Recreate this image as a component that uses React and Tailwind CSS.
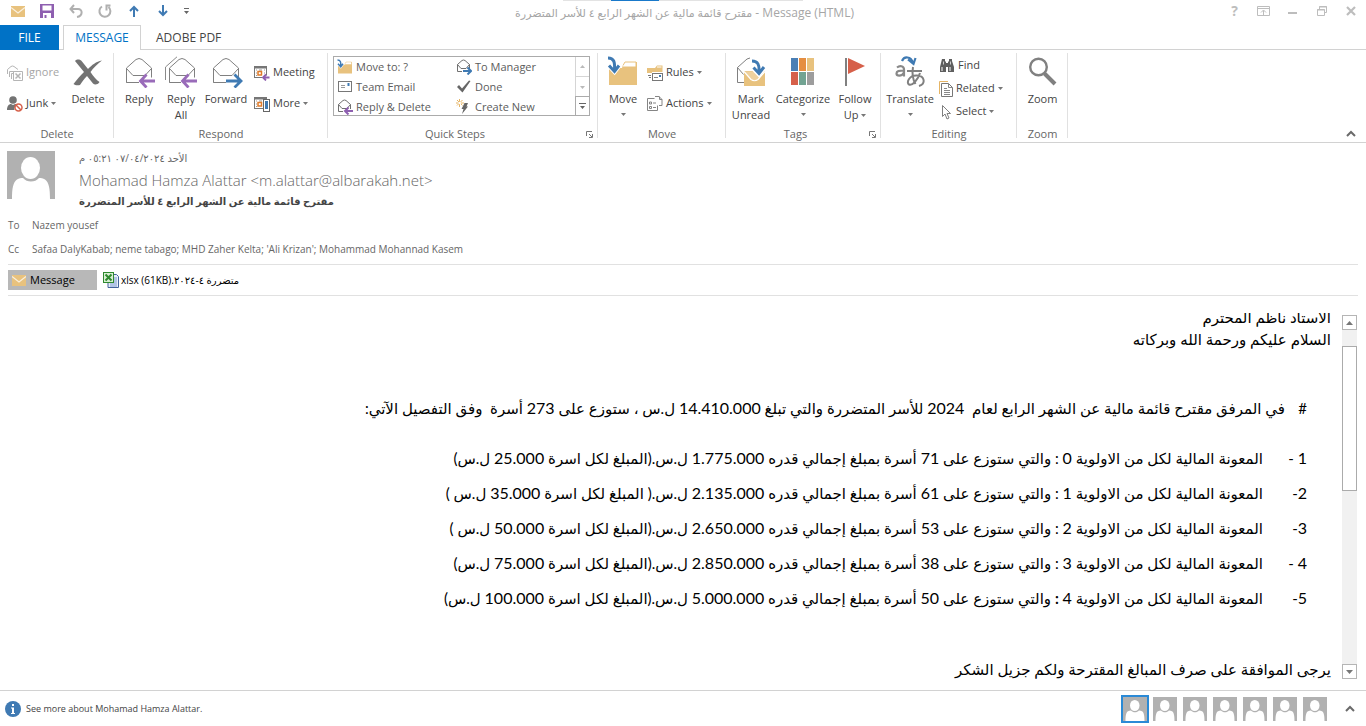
import React from "react";

const PURPLE = "#8e5fb0";
const BLUE = "#3f7ab3";
const GRAY = "#737373";
const TAN = "#e8c27e";

function Caret({ className = "" }) {
  return (
    <svg width="5" height="3" viewBox="0 0 5 3" className={className} aria-hidden="true">
      <path d="M0 0h5L2.5 3z" fill="#777" />
    </svg>
  );
}

function Chevron() {
  return (
    <svg width="10" height="7" viewBox="0 0 10 7" fill="none" stroke="#6a6a6a" strokeWidth="2" aria-hidden="true">
      <path d="M1 6l4-4 4 4" />
    </svg>
  );
}

function Person({ size, className = "" }) {
  return (
    <svg width={size} height={size} viewBox="0 0 48 48" className={className} aria-hidden="true">
      <rect width="48" height="48" fill="#b1b1b1" />
      <ellipse cx="23.5" cy="17" rx="9.5" ry="11" fill="#fff" />
      <path d="M5 48c0-10 1-17 5-19.500c2-1.200 4-1.500 6-1.500c2 2.500 5 3.500 8 3.500s6-1 8-3.500c2 0 4 .3 6 1.500c4 2.500 5 9.500 5 19.500z" fill="#fff" />
    </svg>
  );
}

function MailIcon() {
  return (
    <svg width="14" height="11" viewBox="0 0 14 11" aria-hidden="true">
      <rect width="14" height="11" fill={TAN} />
      <path d="M0 1.500l7 5.500l7-5.500" fill="none" stroke="#fff" strokeOpacity=".75" strokeWidth="1.300" />
    </svg>
  );
}

function Envelope({ all, arrow }) {
  return (
    <svg width="34" height="32" viewBox="0 0 34 32" fill="none" aria-hidden="true">
      {all && <path d="M1.500 24V11L13 0.800" stroke="#8a8a8a" />}
      <g transform={all ? "translate(1 0)" : "translate(0 0)"}>
        <path d="M4.500 12L14 3.500q3-2 6 0L29.500 12v14.500h-25z" fill="#fff" stroke="#808080" />
        <path d="M4.500 12.500l6.500 7h12l6.500-7M4.500 26.500v-14" stroke="#808080" />
      </g>
      {arrow === "left" ? (
        <g>
          <path d="M17 25h16" stroke="#fff" strokeWidth="7" />
          <path d="M18 25h15M24.500 18.500L18.500 25l6 6.500" stroke="#996bb9" strokeWidth="2.800" />
        </g>
      ) : (
        <g>
          <path d="M17 25h16" stroke="#fff" strokeWidth="7" />
          <path d="M17 25h15M25.500 18.500L32 25l-6.500 6.500" stroke={BLUE} strokeWidth="2.800" />
        </g>
      )}
    </svg>
  );
}

function SmallEnvelope({ arrow }) {
  return (
    <svg width="16" height="16" viewBox="0 0 16 16" fill="none" aria-hidden="true">
      <path d="M1.500 5.500L6 1.500q1.500-1 3 0l4.500 4v7h-12z" fill="#fff" stroke="#707070" />
      <path d="M1.500 5.500l3.500 4h5l3.500-4" stroke="#707070" />
      {arrow === "left" ? (
        <g>
          <path d="M6 12h10" stroke="#fff" strokeWidth="4" />
          <path d="M8 12h8M11.500 8.500L8 12l3.500 3.500" stroke={PURPLE} strokeWidth="2" />
        </g>
      ) : (
        <g>
          <path d="M6 12h10" stroke="#fff" strokeWidth="4" />
          <path d="M7 12h8M11.500 8.500L15 12l-3.500 3.500" stroke={BLUE} strokeWidth="2" />
        </g>
      )}
    </svg>
  );
}

function DeleteIcon() {
  return (
    <svg width="30" height="32" viewBox="0 0 30 32" aria-hidden="true">
      <path d="M2 5c2-2 5-2 7 .5L15 13c4-4 8-7.500 14-8.500C25 7.500 20 12 17.500 16c2.500 4 6 8 9 10c-2 3-5 3-6.500 1.500c-2-2.500-4-5-6-7.500c-3 3-5 6-7 9c-2 .5-5 .5-6.500-1c3-4 7-8.500 10.500-12C8 12.500 5 8.500 2 5z" fill={GRAY} />
    </svg>
  );
}

function IgnoreIcon() {
  return (
    <svg width="16" height="16" viewBox="0 0 16 16" fill="none" stroke="#b5b5b5" aria-hidden="true">
      <path d="M.5 9V4.500L4 1.500q1.500-1 3 0L11 4.500" />
      <path d="M2.500 12V6.500h9M4.500 14V8.500h2" />
      <path d="M7 6.500h8.500v9H6.500v-9z" fill="#fff" />
      <path d="M8.500 8.500l5 5M13.500 8.500l-5 5" strokeWidth="1.500" />
    </svg>
  );
}

function JunkIcon() {
  return (
    <svg width="16" height="16" viewBox="0 0 16 16" aria-hidden="true">
      <circle cx="6" cy="4" r="3.800" fill={GRAY} />
      <path d="M0 14c0-4 2-6 4-6l2 1l2-1c1 0 2 .5 2.500 1.500C8 10 7 12 7.500 14z" fill={GRAY} />
      <circle cx="11.500" cy="11.500" r="3.500" fill="#fff" stroke="#d6604a" strokeWidth="1.500" />
      <path d="M9 9l5 5" stroke="#d6604a" strokeWidth="1.500" />
    </svg>
  );
}

function Calendar({ kind }) {
  return (
    <svg width="16" height="16" viewBox="0 0 16 16" fill="none" aria-hidden="true">
      <rect x=".5" y="1.500" width="12" height="11" fill="#fff" stroke="#777" />
      <path d="M0 2.500h13" stroke="#777" strokeWidth="2" />
      <path d="M2 5h1M2 8h1M2 10.500h1M10 5h1M10 8h1M5 5h3" stroke="#999" />
      <rect x="4" y="6.500" width="3.500" height="3.500" fill="#fff" stroke="#e07b2a" strokeWidth="1.500" />
      {kind === "meeting" ? (
        <g>
          <path d="M8 12.500h8" stroke="#fff" strokeWidth="4" />
          <path d="M9 12.500h6.500M12 9.500l-3 3l3 3" stroke={PURPLE} strokeWidth="1.800" />
        </g>
      ) : (
        <g>
          <rect x="9.500" y="3.500" width="6" height="12" fill="#fff" stroke="#666" />
          <rect x="11" y="5" width="3" height="8" fill={BLUE} />
        </g>
      )}
    </svg>
  );
}

function MoveFolder({ size }) {
  return (
    <svg width={size} height={size} viewBox="0 0 32 32" fill="none" aria-hidden="true">
      <path d="M2 12h13l4-6h11v23H2z" fill={TAN} />
      <path d="M16 9.500l2-3.500h11v5H15" fill="#fff" stroke={TAN} strokeWidth="1" />
      <path d="M1 1c6 0 7 4 6.500 13M1.500 9l6 6.500l5-6.500" stroke="#fff" strokeWidth="5" />
      <path d="M1 2c6 0 7 4 6.500 12M2 9.500l5.500 6l4.500-6" stroke={BLUE} strokeWidth="3" />
    </svg>
  );
}

function CardIcon() {
  return (
    <svg width="16" height="16" viewBox="0 0 16 16" fill="none" aria-hidden="true">
      <rect x="1.500" y="2.500" width="13" height="10" fill="#fff" stroke="#777" />
      <path d="M4 6.500h4M4 8.500h4" stroke="#999" />
      <rect x="10.500" y="4" width="2" height="3" fill={BLUE} />
    </svg>
  );
}

function CheckIcon() {
  return (
    <svg width="16" height="16" viewBox="0 0 16 16" aria-hidden="true">
      <path d="M1 8l2-2l3 3.500L13 1.500l1.500.5L6.500 13.500z" fill="#666" />
    </svg>
  );
}

function BoltIcon() {
  return (
    <svg width="16" height="16" viewBox="0 0 16 16" aria-hidden="true">
      <path d="M3.500 0v8M0 4h8M1 1l5.500 5.500M6.500 1L1 6.500" stroke="#e6b565" strokeWidth="1" />
      <circle cx="3.700" cy="4" r="1.300" fill="#fff" />
      <path d="M8.500 4H12l-1.500 3.500H12L6 15l1.500-5H5.500z" fill="#666" />
    </svg>
  );
}

function RulesIcon() {
  return (
    <svg width="16" height="16" viewBox="0 0 16 16" fill="none" aria-hidden="true">
      <path d="M0 3h8l2-2.500h5.500V12H0z" fill={TAN} />
      <path d="M10 2h4.500" stroke="#fff" />
      <path d="M0 8h5v8H0z" fill="#fff" />
      <path d="M1 10.500h3M2 12.500h2" stroke="#777" />
      <path d="M5 7h11v2H5z" fill="#fff" />
      <rect x="5.500" y="8.500" width="10" height="7" fill="#fff" stroke="#777" />
      <path d="M7 12.500h4" stroke="#888" />
      <rect x="12" y="10" width="2" height="2" fill={BLUE} />
    </svg>
  );
}

function ActionsIcon() {
  return (
    <svg width="16" height="16" viewBox="0 0 16 16" fill="none" stroke="#858585" aria-hidden="true">
      <path d="M7.500 2.500h-7v12h10v-5" />
      <path d="M8 .5h4l3 3v6h-3" />
      <path d="M12.500.5v3H15M2.500 6h2v2h-2zM2.500 10.500h2v2h-2zM6 7h3M6 11.500h3" />
    </svg>
  );
}

function MarkUnreadIcon() {
  return (
    <svg width="32" height="32" viewBox="0 0 32 32" fill="none" aria-hidden="true">
      <path d="M2.500 26.500v-15L12 3q3-2 6 0l6 5" stroke="#808080" />
      <path d="M2.500 11.500l6 7M2.500 26.500h8" stroke="#808080" />
      <path d="M9 15h21v15H9z" fill={TAN} />
      <path d="M9 15.500l7 8q3.500 2.500 7 0l7-8" stroke="#fff" strokeWidth="1.200" fill="#fff" fillOpacity=".25" />
      <path d="M15 3c8 0 9 5 9 12M18 12l6 6l5.500-7" stroke="#fff" strokeWidth="5" />
      <path d="M17 5c6 0 7.500 4 7 11M18.500 11.500l5.500 6l5-6.500" stroke={BLUE} strokeWidth="3" />
    </svg>
  );
}

function CategorizeIcon() {
  return (
    <svg width="24" height="32" viewBox="0 0 24 32" aria-hidden="true">
      <rect x="0" y="2" width="7" height="13" fill="#4a7fb5" />
      <rect x="8" y="2" width="7" height="13" fill="#e58e41" />
      <rect x="16" y="2" width="7" height="13" fill={TAN} />
      <rect x="0" y="16" width="7" height="13" fill="#d6604a" />
      <rect x="8" y="16" width="7" height="13" fill="#72a392" />
      <rect x="16" y="16" width="7" height="13" fill="#9d9d9d" />
    </svg>
  );
}

function FlagIcon() {
  return (
    <svg width="22" height="32" viewBox="0 0 22 32" aria-hidden="true">
      <rect x="1" y="2" width="2" height="28" fill="#808080" />
      <path d="M4 2l17 8L4 18z" fill="#d6604a" />
    </svg>
  );
}

function TranslateIcon() {
  return (
    <svg width="32" height="32" viewBox="0 0 32 32" fill="none" aria-hidden="true">
      <path d="M8 5c2-5 9-5 11 2M14 3.500l5.500 4.500L21.500 2" stroke={BLUE} strokeWidth="2.200" />
      <path d="M3 11.500c2.500-2 7-2 7 2v7M10 14.500c-5 0-7.500 .5-7.500 3s5 3.500 7.500-1" stroke="#888" strokeWidth="2.200" />
      <path d="M13 15h15M19 11c-1 6-.5 12 2.500 17M26 17c-2 7-8 13-11 11.500s0-9.500 8-9s9 8.500 2 10.500" stroke="#808080" strokeWidth="2" />
    </svg>
  );
}

function FindIcon() {
  return (
    <svg width="16" height="16" viewBox="0 0 16 16" fill="#5f5f5f" aria-hidden="true">
      <path d="M3 1h3v2l1 1v10H1V9zM10 1h3v2l2 6v5H9V4l1-1z" />
      <rect x="6" y="5" width="4" height="4" />
      <path d="M3 9v4M11 9v4" stroke="#fff" />
      <path d="M4.500 3.500v3M11.500 3.500v3" stroke="#ccc" />
    </svg>
  );
}

function RelatedIcon() {
  return (
    <svg width="14" height="16" viewBox="0 0 14 16" fill="none" aria-hidden="true">
      <path d="M.5 13V.5H9" stroke="#e6b565" />
      <path d="M2.500 2.500h7l4 4v9h-11z" fill="#fff" stroke="#777" />
      <path d="M9.500 2.500v4h4M5 7.500h3M5 9.500h6M5 11.500h6M5 13.500h6" stroke="#888" />
    </svg>
  );
}

function SelectIcon() {
  return (
    <svg width="14" height="16" viewBox="0 0 14 16" fill="#fff" stroke="#808080" aria-hidden="true">
      <path d="M3.500 1.500v11l2.500-2.500l2 5l2-1l-2-4.500h3.500z" />
    </svg>
  );
}

function ZoomIcon() {
  return (
    <svg width="28" height="32" viewBox="0 0 28 32" fill="none" stroke="#808080" aria-hidden="true">
      <circle cx="9.500" cy="11" r="8.300" strokeWidth="2.400" />
      <path d="M15.500 17.500l10.500 10.500" strokeWidth="4" />
    </svg>
  );
}

function ExcelIcon() {
  return (
    <svg width="16" height="16" viewBox="0 0 16 16" fill="none" aria-hidden="true">
      <path d="M5 2.500h8.500l2 2v11H5z" fill="#e8eefa" stroke="#44639c" />
      <path d="M11 6h3M11 8h3M11 10h3M7 12h7M7 14h7" stroke="#7d9bd1" />
      <rect x=".5" y=".5" width="10" height="10" fill="#d9f0d3" stroke="#2f8a2f" />
      <path d="M2.500 2.500l6 6M8.500 2.500l-6 6" stroke="#2f8a2f" strokeWidth="2" />
    </svg>
  );
}

function Launcher() {
  return (
    <button aria-label="More options" className="absolute right-[5px] bottom-[4px]">
      <svg width="7" height="7" viewBox="0 0 7 7" fill="none" stroke="#777" aria-hidden="true">
        <path d="M.5 5V.5H6M3 3l3 3M6.500 3v3.500H3" />
      </svg>
    </button>
  );
}

function Group({ name, width, children, launcher }) {
  return (
    <section aria-label={name} className={"relative flex shrink-0 flex-col " + width}>
      <div className="flex h-[76px]">{children}</div>
      <div className={"text-center leading-4 text-[#666] " + (launcher ? "pr-4" : "")}>{name}</div>
      {launcher && <Launcher />}
      <div className="absolute top-[3px] right-0 h-[85px] w-px bg-[#e1e1e1]" />
    </section>
  );
}

function Large({ icon, lines, caret, width }) {
  return (
    <button className={"flex shrink-0 flex-col items-center pt-[6px] text-center leading-4 " + width}>
      {icon}
      <span className="mt-[3px] whitespace-nowrap">{lines[0]}</span>
      {lines[1] && (
        <span className="flex items-center gap-[3px]">
          {lines[1]}
          {caret && <Caret />}
        </span>
      )}
      {!lines[1] && caret && <Caret className="mt-[6px]" />}
    </button>
  );
}

function Small({ icon, label, caret, disabled, height = "h-[31px]" }) {
  return (
    <button
      disabled={disabled}
      className={"flex items-center gap-[3px] whitespace-nowrap " + height + (disabled ? " text-[#a5a5a5]" : "")}
    >
      {icon}
      <span>{label}</span>
      {caret && <Caret />}
    </button>
  );
}

function QuickAccess() {
  const items = [
    ["Mail", <MailIcon />],
    ["Save", (
      <svg width="14" height="14" viewBox="0 0 14 14" aria-hidden="true">
        <path d="M0 0h14v14H0z" fill={PURPLE} />
        <path d="M2.500 1.500h9v5h-9zM3 9h8v5H3z" fill="#fff" />
        <path d="M4.500 11h2v3h-2z" fill={PURPLE} />
      </svg>
    )],
    ["Undo", (
      <svg width="14" height="14" viewBox="0 0 14 14" fill="none" stroke="#b0b0b0" strokeWidth="2" aria-hidden="true">
        <path d="M5 1L1.500 5L5 9M1.500 5H9c5 0 5 7-1 8" />
      </svg>
    )],
    ["Redo", (
      <svg width="14" height="14" viewBox="0 0 14 14" fill="none" stroke="#b0b0b0" strokeWidth="2" aria-hidden="true">
        <path d="M4 2.500a5.500 5.500 0 1 0 6.500.5M7.500 1.500h5M8.500 1v5.500" />
      </svg>
    )],
    ["Previous", (
      <svg width="12" height="12" viewBox="0 0 12 12" fill="none" stroke={BLUE} strokeWidth="2" aria-hidden="true">
        <path d="M6 12V2M2 6l4-4l4 4" />
      </svg>
    )],
    ["Next", (
      <svg width="12" height="12" viewBox="0 0 12 12" fill="none" stroke={BLUE} strokeWidth="2" aria-hidden="true">
        <path d="M6 0v10M2 6l4 4l4-4" />
      </svg>
    )],
  ];
  return (
    <div className="flex h-[22px] flex-1 items-center pl-[3px]">
      {items.map(([name, icon]) => (
        <button key={name} aria-label={name} className="flex w-[29px] justify-center">{icon}</button>
      ))}
      <button aria-label="Customize" className="flex w-[20px] justify-center">
        <svg width="6" height="6" viewBox="0 0 6 6" aria-hidden="true">
          <path d="M0 0h5v1H0zM0 3h5L2.500 6z" fill="#666" />
        </svg>
      </button>
    </div>
  );
}

function WindowButtons() {
  return (
    <div className="flex h-[22px] flex-1 items-center justify-end">
      <button aria-label="Help" className="flex w-[29px] justify-center text-[14px] leading-none font-bold text-[#bdbdbd]">?</button>
      <button aria-label="Ribbon display" className="flex w-[29px] justify-center">
        <svg width="13" height="10" viewBox="0 0 13 10" fill="none" stroke="#bdbdbd" aria-hidden="true">
          <path d="M.5.5h12v9H.5zM0 2.500h13M6.500 9V4.500M4 6.500L6.500 4L9 6.500" />
        </svg>
      </button>
      <button aria-label="Minimize" className="flex w-[29px] justify-center">
        <svg width="9" height="6" viewBox="0 0 9 6" aria-hidden="true"><rect y="4" width="9" height="2" fill="#bdbdbd" /></svg>
      </button>
      <button aria-label="Restore" className="flex w-[29px] justify-center">
        <svg width="10" height="10" viewBox="0 0 10 10" fill="none" stroke="#bdbdbd" aria-hidden="true">
          <path d="M2.500 3V.5h7v6H8M2 1h8M.5 3.500h7v6h-7zM0 4h8" />
        </svg>
      </button>
      <button aria-label="Close" className="flex w-[30px] justify-center">
        <svg width="10" height="10" viewBox="0 0 10 10" fill="none" stroke="#bdbdbd" strokeWidth="2.200" aria-hidden="true">
          <path d="M1 1l8 8M9 1L1 9" />
        </svg>
      </button>
    </div>
  );
}

function QuickSteps() {
  const steps = [
    ["Move to: ?", <MoveFolder size={16} />],
    ["To Manager", <SmallEnvelope arrow="right" />],
    ["Team Email", <CardIcon />],
    ["Done", <CheckIcon />],
    ["Reply & Delete", <SmallEnvelope arrow="left" />],
    ["Create New", <BoltIcon />],
  ];
  return (
    <div className="mt-[6px] ml-[5px] flex h-[60px] w-[257px] border border-[#ababab] text-[#5c5c5c]">
      <div className="grid flex-1 grid-cols-2 grid-rows-[20px_20px_20px] pl-[3px]">
        {steps.map(([name, icon]) => (
          <button key={name} className="flex items-center gap-[3px] whitespace-nowrap">
            {icon}
            <span>{name}</span>
          </button>
        ))}
      </div>
      <div className="flex w-[14px] flex-col border-l border-[#d5d5d5]">
        <button aria-label="Scroll up" className="flex h-5 items-center justify-center border-b border-[#d5d5d5]">
          <Caret className="rotate-180 opacity-50" />
        </button>
        <button aria-label="Scroll down" className="flex h-5 items-center justify-center">
          <Caret className="opacity-50" />
        </button>
        <button aria-label="More steps" className="flex flex-1 items-center justify-center outline outline-[#ababab]">
          <svg width="7" height="7" viewBox="0 0 7 7" aria-hidden="true">
            <path d="M0 0h7v1H0zM1 3h5L3.500 6z" fill="#666" />
          </svg>
        </button>
      </div>
    </div>
  );
}

function Ribbon() {
  return (
    <div className="flex h-[93px] border-b border-[#d2d2d2] text-[#444]">
      <Group name="Delete" width="w-[114px]">
        <div className="mt-[7px] ml-[7px] w-[60px]">
          <Small icon={<IgnoreIcon />} label="Ignore" disabled />
          <Small icon={<JunkIcon />} label="Junk" caret />
        </div>
        <Large icon={<DeleteIcon />} lines={["Delete"]} width="w-[42px]" />
      </Group>
      <Group name="Respond" width="w-[214px]">
        <Large icon={<Envelope arrow="left" />} lines={["Reply"]} width="ml-[4px] w-[42px]" />
        <Large icon={<Envelope all arrow="left" />} lines={["Reply", "All"]} width="w-[42px]" />
        <Large icon={<Envelope arrow="right" />} lines={["Forward"]} width="w-[48px]" />
        <div className="mt-[7px] ml-[4px]">
          <Small icon={<Calendar kind="meeting" />} label="Meeting" />
          <Small icon={<Calendar kind="more" />} label="More" caret />
        </div>
      </Group>
      <Group name="Quick Steps" width="w-[270px]" launcher>
        <QuickSteps />
      </Group>
      <Group name="Move" width="w-[128px]">
        <Large icon={<MoveFolder size={32} />} lines={["Move"]} caret width="ml-[4px] w-[42px]" />
        <div className="mt-[7px] ml-[3px]">
          <Small icon={<RulesIcon />} label="Rules" caret />
          <Small icon={<ActionsIcon />} label="Actions" caret />
        </div>
      </Group>
      <Group name="Tags" width="w-[155px]" launcher>
        <Large icon={<MarkUnreadIcon />} lines={["Mark", "Unread"]} width="ml-[4px] w-[42px]" />
        <Large icon={<CategorizeIcon />} lines={["Categorize"]} caret width="w-[62px]" />
        <Large icon={<FlagIcon />} lines={["Follow", "Up"]} caret width="w-[42px]" />
      </Group>
      <Group name="Editing" width="w-[136px]">
        <Large icon={<TranslateIcon />} lines={["Translate"]} caret width="ml-[4px] w-[50px]" />
        <div className="mt-[4px] ml-[4px]">
          <Small icon={<FindIcon />} label="Find" height="h-[23px]" />
          <Small icon={<RelatedIcon />} label="Related" caret height="h-[23px]" />
          <Small icon={<SelectIcon />} label="Select" caret height="h-[23px]" />
        </div>
      </Group>
      <Group name="Zoom" width="w-[51px]">
        <Large icon={<ZoomIcon />} lines={["Zoom"]} width="w-full" />
      </Group>
      <button aria-label="Collapse the ribbon" className="mb-[5px] ml-auto self-end pr-[10px]"><Chevron /></button>
    </div>
  );
}

// Latin figures are set one size larger than the Arabic words around them.
function Mixed({ text }) {
  return text
    .split(/(\d[\d.]*\d|\d)/)
    .map((part, i) => (i % 2 ? <span key={i} className="text-[16px] leading-none">{part}</span> : part));
}

const subject = "مقترح قائمة مالية عن الشهر الرابع ٤ للأسر المتضررة";

const items = [
  ["1 -", <Mixed text="المعونة المالية لكل من الاولوية 0 : والتي ستوزع على 71 أسرة بمبلغ إجمالي قدره 1.775.000 ل.س.(المبلغ لكل اسرة 25.000 ل.س)" />],
  ["2-", <Mixed text="المعونة المالية لكل من الاولوية 1 : والتي ستوزع على 61 أسرة بمبلغ اجمالي قدره 2.135.000 ل.س.( المبلغ لكل اسرة 35.000 ل.س )" />],
  ["3-", <Mixed text="المعونة المالية لكل من الاولوية 2 : والتي ستوزع على 53 أسرة بمبلغ إجمالي قدره 2.650.000 ل.س.(المبلغ لكل اسرة 50.000 ل.س )" />],
  ["4 -", <Mixed text="المعونة المالية لكل من الاولوية 3 : والتي ستوزع على 38 أسرة بمبلغ إجمالي قدره 2.850.000 ل.س.(المبلغ لكل اسرة 75.000 ل.س)" />],
  ["5-", (
    <>
      <Mixed text="المعونة المالية لكل من الاولوية 4 " />
      <b>:</b>
      <Mixed text=" والتي ستوزع على 50 أسرة بمبلغ إجمالي قدره 5.000.000 ل.س.(المبلغ لكل اسرة 100.000 ل.س)" />
    </>
  )],
];

export default function App() {
  return (
    <div className="flex h-screen flex-col overflow-hidden bg-white font-['Open_Sans','DejaVu_Sans',sans-serif] text-[11px] text-[#444]">
      <div className="relative flex h-[25px] shrink-0 items-start">
        <div className="absolute top-0 left-1/2 h-px w-[240px] -translate-x-1/2 bg-[#e3e3e3]">
          <div className="ml-12 h-px w-12 bg-[#1979ca]" />
        </div>
        <QuickAccess />
        <h1 className="pt-[5px] leading-4 text-[#a6a6a6]">
          {subject}
          <span className="text-[12px] leading-none"> - Message (HTML)</span>
        </h1>
        <WindowButtons />
      </div>
      <nav className="flex h-[25px] shrink-0 text-[12px]">
        <button className="w-[59px] bg-[#0072c6] pt-px text-white">FILE</button>
        <div className="w-[4px] border-b border-[#d2d2d2]" />
        <button className="w-[78px] border-x border-t border-[#d2d2d2] text-[#0072c6]">MESSAGE</button>
        <div className="flex flex-1 border-b border-[#d2d2d2] pt-[2px] pl-[15px]"><button>ADOBE PDF</button></div>
      </nav>
      <div className="shrink-0"><Ribbon /></div>

      <header className="shrink-0 px-2 pt-2 text-[#666]">
        <div className="flex gap-6">
          <Person size={48} className="-ml-px" />
          <div className="flex flex-col items-start">
            <div dir="rtl" className="text-[10px] leading-[14px]">الأحد ٠٧/٠٤/٢٠٢٤ ٠٥:٢١ م</div>
            <div className="text-[15px] leading-[30px] font-light">Mohamad Hamza Alattar &lt;m.alattar@albarakah.net&gt;</div>
            <div dir="rtl" className="-mt-[2px] text-[10px] leading-4 font-bold text-[#444]">{subject}</div>
          </div>
        </div>
        <div className="mt-[4px] text-[10px]">
          <div className="flex h-6 items-center"><span className="w-6">To</span><span>Nazem yousef</span></div>
          <div className="flex h-6 items-center">
            <span className="w-6">Cc</span>
            <span>Safaa DalyKabab; neme tabago; MHD Zaher Kelta; 'Ali Krizan'; Mohammad Mohannad Kasem</span>
          </div>
        </div>
        <div className="mt-[3px] flex h-8 items-center gap-[6px] border-y border-[#e1e1e1] text-black">
          <button className="flex h-5 w-[89px] items-center gap-[4px] bg-[#b8b8b8] pl-[4px]"><MailIcon />Message</button>
          <a href="#attachment" className="flex items-center gap-[2px]">
            <ExcelIcon />
            <span dir="rtl" className="text-[10px]">متضررة ٤-٢٠٢٤.xlsx (61KB)</span>
          </a>
        </div>
      </header>

      <main className="flex min-h-0 flex-1 pt-[17px] pr-[9px]">
        <div dir="rtl" className="min-w-0 flex-1 overflow-hidden pr-[11px] font-['Lato','DejaVu_Sans',sans-serif] text-[15px] leading-[22px] whitespace-nowrap text-black">
          <p className="-mt-[7px]">الاستاد ناظم المحترم</p>
          <p>السلام عليكم ورحمة الله وبركاته</p>
          <p className="mt-[47px] flex pr-6">
            <span className="w-[22px]">#</span>
            <span><Mixed text={"في المرفق مقترح قائمة مالية عن الشهر الرابع لعام \u00a02024 للأسر المتضررة والتي تبلغ 14.410.000 ل.س ، ستوزع على 273 أسرة \u00a0وفق التفصيل الآتي:"} /></span>
          </p>
          <ol className="mt-[22px] pr-6 leading-[35px]">
            {items.map(([n, t]) => (
              <li key={n} className="flex">
                <span className="w-[44px]"><Mixed text={n} /></span>
                <span>{t}</span>
              </li>
            ))}
          </ol>
          <p className="mt-[42px]">يرجى الموافقة على صرف المبالغ المقترحة ولكم جزيل الشكر</p>
        </div>
        <div className="mt-[2px] mb-[11px] flex w-[15px] shrink-0 flex-col bg-[#f1f1f1]">
          <button aria-label="Scroll message up" className="flex h-[15px] items-center justify-center border border-[#b5b5b5] bg-white">
            <svg width="7" height="4" viewBox="0 0 7 4" aria-hidden="true"><path d="M0 4h7L3.500 0z" fill="#777" /></svg>
          </button>
          <div className="mt-4 h-[145px] border border-[#ababab] bg-white" />
          <button aria-label="Scroll message down" className="mt-auto flex h-[15px] items-center justify-center border border-[#b5b5b5] bg-white">
            <svg width="7" height="4" viewBox="0 0 7 4" aria-hidden="true"><path d="M0 0h7L3.500 4z" fill="#777" /></svg>
          </button>
        </div>
      </main>

      <footer className="flex h-9 shrink-0 items-center border-t border-[#d2d2d2] pr-[11px] pl-[5px]">
        <svg width="16" height="16" viewBox="0 0 16 16" aria-hidden="true">
          <circle cx="8" cy="8" r="8" fill={BLUE} />
          <path d="M7 3h2v2H7zM6 6.500h3V12h1v1H6v-1h1V7.500H6z" fill="#fff" />
        </svg>
        <span className="ml-[5px] text-[9px]">See more about Mohamad Hamza Alattar.</span>
        <div className="ml-auto flex items-center gap-[6px]">
          <button aria-label="Person 1" className="-mr-[2px] border-2 border-[#2b8ad6]"><Person size={24} /></button>
          {[2, 3, 4, 5, 6, 7].map((n) => (
            <button key={n} aria-label={"Person " + n}><Person size={24} /></button>
          ))}
        </div>
        <button aria-label="Expand people pane" className="ml-[18px]"><Chevron /></button>
      </footer>
    </div>
  );
}
